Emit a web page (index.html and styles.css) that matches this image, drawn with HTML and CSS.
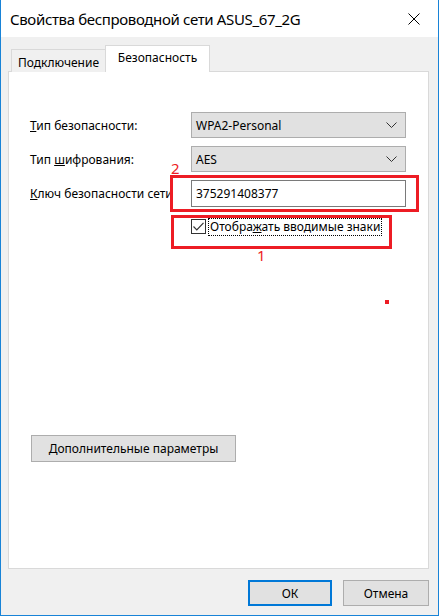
FILE: index.html
```html
<!DOCTYPE html>
<html lang="ru">
<head>
<meta charset="utf-8">
<title>Свойства беспроводной сети</title>
<link rel="stylesheet" href="styles.css">
</head>
<body>
<div class="window">
  <div class="titlebar">
    <span class="title">Свойства беспроводной сети ASUS_67_2G</span>
    <span class="close">
      <svg width="12" height="12" viewBox="0 0 12 12"><path d="M0.5 0.5 L11.5 11.5 M11.5 0.5 L0.5 11.5" stroke="#000" stroke-width="1" fill="none"/></svg>
    </span>
  </div>
  <div class="client">
    <div class="tabs">
      <div class="tab">Подключение</div>
      <div class="tab active">Безопасность</div>
    </div>
    <div class="panel">
      <div class="form">
        <label class="lbl"><u>Т</u>ип безопасности:</label>
        <div class="select"><span>WPA2-Personal</span><svg class="chev" width="11" height="6" viewBox="0 0 11 6"><path d="M0.5 0.5 L5.5 5.5 L10.5 0.5" stroke="#333" fill="none"/></svg></div>
        <label class="lbl">Тип <u>ш</u>ифрования:</label>
        <div class="select"><span>AES</span><svg class="chev" width="11" height="6" viewBox="0 0 11 6"><path d="M0.5 0.5 L5.5 5.5 L10.5 0.5" stroke="#333" fill="none"/></svg></div>
        <label class="lbl"><u>К</u>люч безопасности сети</label>
        <div class="input">375291408377</div>
        <div class="empty"></div>
        <div class="check">
          <span class="box"><svg width="11" height="9" viewBox="0 0 11 9"><path d="M0.5 4.5 L3.8 7.8 L10.5 0.8" stroke="#333" stroke-width="1.2" fill="none"/></svg></span>
          <span class="cap">Отобра<u>ж</u>ать вводимые знаки</span>
        </div>
      </div>
      <button class="btn adv"><u>Д</u>ополнительные параметры</button>

      <div class="mark mark2"></div>
      <div class="mark mark1"></div>
      <span class="num num2">2</span>
      <span class="num num1">1</span>
      <span class="dot"></span>
    </div>
    <div class="footer">
      <button class="btn ok">ОК</button>
      <button class="btn cancel">Отмена</button>
    </div>
  </div>
</div>
</body>
</html>
```
FILE: styles.css
```css
* { box-sizing: border-box; }
html, body { margin: 0; padding: 0; }
body {
  font-family: "Noto Sans", "Open Sans", sans-serif;
  font-size: 12px;
  color: #000;
  background: #fff;
}
.window {
  width: 439px;
  height: 616px;
  border-left: 1px solid #1883d7;
  border-right: 1px solid #1883d7;
  border-bottom: 1px solid #1883d7;
  display: flex;
  flex-direction: column;
}
.titlebar {
  height: 37px;
  background: #fff;
  display: flex;
  align-items: center;
  padding-left: 9px;
  padding-right: 18px;
  justify-content: space-between;
}
.title { font-size: 15px; letter-spacing: -0.35px; }
.close { display: flex; }
.client {
  flex: 1;
  background: #f0f0f0;
  display: flex;
  flex-direction: column;
  padding: 9px 9px 0 7px;
}
.tabs {
  display: flex;
  align-items: flex-end;
  height: 26px;
  padding-left: 3px;
  margin-bottom: -1px;
  position: relative;
  z-index: 1;
}
.tab {
  height: 23px;
  width: 95px;
  border: 1px solid #d9d9d9;
  border-bottom: none;
  background: #f0f0f0;
  display: flex;
  align-items: center;
  justify-content: center;
  padding-top: 2px;
}
.tab.active {
  height: 27px;
  width: 105px;
  background: #fff;
  border-left: 1px solid #d9d9d9;
  margin-left: -1px;
  padding-top: 0;
  padding-bottom: 4px;
}
.panel {
  position: relative;
  height: 498px;
  background: #fff;
  border: 1px solid #d9d9d9;
  padding: 40px 0 0 21px;
}
.form {
  display: grid;
  grid-template-columns: 161px 215px;
  grid-template-rows: 26px 26px 27px 16px;
  row-gap: 8px;
  align-items: center;
}
.lbl { white-space: nowrap; }
.lbl u, .cap u, .adv u { text-decoration: underline; }
.select {
  height: 26px;
  background: #e1e1e1;
  border: 1px solid #adadad;
  display: flex;
  align-items: center;
  justify-content: space-between;
  padding: 0 8px 0 4px;
}
.input {
  height: 27px;
  border: 1px solid #7a7a7a;
  display: flex;
  align-items: center;
  padding-left: 4px;
  background: #fff;
}
.check {
  display: flex;
  align-items: center;
  height: 16px;
  margin-top: 7px;
}
.box {
  width: 15px;
  height: 15px;
  border: 1px solid #333;
  display: flex;
  align-items: center;
  justify-content: center;
  margin-right: 3px;
}
.cap {
  outline: 1px dotted #000;
  padding: 0 1px;
  line-height: 16px;
}
.btn {
  font-family: inherit;
  font-size: 12px;
  color: #000;
  background: #e1e1e1;
  border: 1px solid #adadad;
  height: 27px;
  padding: 0;
  display: flex;
  align-items: center;
  justify-content: center;
}
.adv {
  width: 205px;
  margin-top: 204px;
  margin-left: 1px;
}
.footer {
  display: flex;
  justify-content: flex-end;
  gap: 11px;
  padding-top: 11px;
}
.ok { width: 84px; border: 2px solid #0078d7; height: 26px; }
.cancel { width: 86px; height: 26px; }
.mark {
  position: absolute;
  border: 3px solid #ed1c24;
}
.mark2 { left: 161px; top: 103px; width: 249px; height: 37px; }
.mark1 { left: 162px; top: 143px; width: 221px; height: 34px; }
.num {
  position: absolute;
  color: #ed1c24;
  font-size: 15px;
  line-height: 15px;
}
.num2 { left: 162px; top: 89px; }
.num1 { left: 248px; top: 176px; }
.dot {
  position: absolute;
  left: 376px;
  top: 228px;
  width: 4px;
  height: 4px;
  background: #ed1c24;
}
```
